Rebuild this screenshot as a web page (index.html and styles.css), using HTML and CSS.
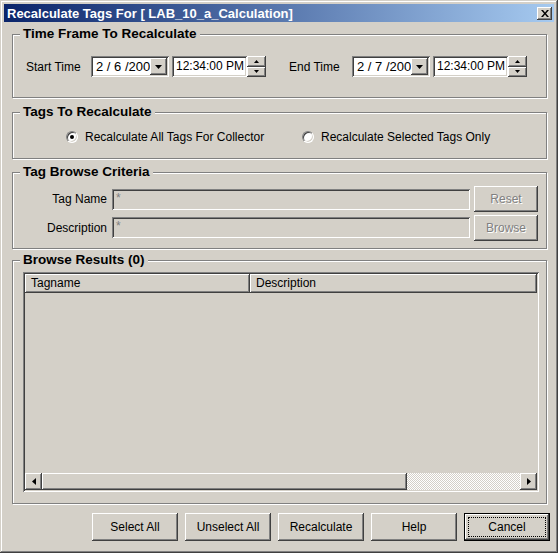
FILE: index.html
```html
<!DOCTYPE html>
<html lang="en">
<head>
  <meta charset="UTF-8" />
  <title>Recalculate Tags</title>
  <link rel="stylesheet" href="styles.css">
</head>
<body>
  <div class="window">

    <!-- title bar -->
    <div class="titlebar">
      <span class="title">Recalculate Tags For [ LAB_10_a_Calculation]</span>
      <span class="close-btn">
        <svg width="8" height="7" viewBox="0 0 8 7"><path d="M0 0h2l2 2.4L6 0h2L5 3.5 8 7H6L4 4.6 2 7H0l3-3.5z" fill="#000"/></svg>
      </span>
    </div>

    <div class="content">

      <!-- Time frame -->
      <fieldset class="group">
        <legend>Time Frame To Recalculate</legend>
        <div class="time-row">
          <span class="time-label">Start Time</span>
          <div class="date-box">
            <span class="date-text">2 / 6 /2006</span>
            <span class="drop-btn"><svg width="7" height="4" viewBox="0 0 7 4"><polygon points="0,0 7,0 3.5,4" fill="#000"/></svg></span>
          </div>
          <div class="time-box">12:34:00 PM</div>
          <div class="spinner">
            <span class="spin-btn"><svg width="5" height="3" viewBox="0 0 5 3"><polygon points="2.5,0 5,3 0,3" fill="#000"/></svg></span>
            <span class="spin-btn"><svg width="5" height="3" viewBox="0 0 5 3"><polygon points="0,0 5,0 2.5,3" fill="#000"/></svg></span>
          </div>

          <span class="time-label end-label">End Time</span>
          <div class="date-box">
            <span class="date-text">2 / 7 /2006</span>
            <span class="drop-btn"><svg width="7" height="4" viewBox="0 0 7 4"><polygon points="0,0 7,0 3.5,4" fill="#000"/></svg></span>
          </div>
          <div class="time-box">12:34:00 PM</div>
          <div class="spinner">
            <span class="spin-btn"><svg width="5" height="3" viewBox="0 0 5 3"><polygon points="2.5,0 5,3 0,3" fill="#000"/></svg></span>
            <span class="spin-btn"><svg width="5" height="3" viewBox="0 0 5 3"><polygon points="0,0 5,0 2.5,3" fill="#000"/></svg></span>
          </div>
        </div>
      </fieldset>

      <!-- Tags to recalculate -->
      <fieldset class="group tags-group">
        <legend>Tags To Recalculate</legend>
        <div class="radio-row">
          <label class="option first-option"><span class="radio checked"></span>Recalculate All Tags For Collector</label>
          <label class="option"><span class="radio"></span>Recalculate Selected Tags Only</label>
        </div>
      </fieldset>

      <!-- Browse criteria -->
      <fieldset class="group criteria-group">
        <legend>Tag Browse Criteria</legend>
        <div class="criteria-grid">
          <span class="field-label">Tag Name</span>
          <div class="input disabled">*</div>
          <span class="btn small-btn disabled-btn">Reset</span>

          <span class="field-label">Description</span>
          <div class="input disabled">*</div>
          <span class="btn small-btn disabled-btn">Browse</span>
        </div>
      </fieldset>

      <!-- Results -->
      <fieldset class="group results-group">
        <legend>Browse Results (0)</legend>
        <div class="listview">
          <div class="list-header">
            <span class="col-head col-tag">Tagname</span>
            <span class="col-head col-desc">Description</span>
          </div>
          <div class="list-body"></div>
          <div class="hscroll">
            <span class="scroll-btn"><svg width="4" height="7" viewBox="0 0 4 7"><polygon points="4,0 4,7 0,3.5" fill="#000"/></svg></span>
            <span class="scroll-thumb"></span>
            <span class="scroll-track"></span>
            <span class="scroll-btn"><svg width="4" height="7" viewBox="0 0 4 7"><polygon points="0,0 4,3.5 0,7" fill="#000"/></svg></span>
          </div>
        </div>
      </fieldset>

      <div class="buttons">
        <span class="btn">Select All</span>
        <span class="btn">Unselect All</span>
        <span class="btn">Recalculate</span>
        <span class="btn">Help</span>
        <span class="btn default-btn"><span class="focus">Cancel</span></span>
      </div>

    </div>
  </div>
</body>
</html>
```

FILE: styles.css
```css
body {
  margin: 0;
  background: #fff;
  font-family: "Liberation Sans", Arial, sans-serif;
  font-size: 12px;
  color: #000;
}

.window {
  width: 558px;
  height: 553px;
  box-sizing: border-box;
  padding: 4px;
  background: #d4d0c8;
  box-shadow: inset -1px -1px #404040, inset 1px 1px #d4d0c8, inset -2px -2px #808080, inset 2px 2px #fff;
}

/* title bar */
.titlebar {
  height: 18px;
  display: flex;
  align-items: center;
  justify-content: space-between;
  padding: 0 2px 0 3px;
  background: linear-gradient(to right, #0a246a, #a6caf0);
}

.title {
  color: #fff;
  font-weight: bold;
  font-size: 13px;
  white-space: nowrap;
}

.close-btn {
  width: 15px;
  height: 13px;
  display: flex;
  align-items: center;
  justify-content: center;
  background: #d4d0c8;
  box-shadow: inset -1px -1px #404040, inset 1px 1px #fff, inset -2px -2px #808080;
}

.content {
  padding: 0 7px 0 8px;
}

/* group boxes */
.group {
  margin: 0;
  padding: 0;
  min-width: 0;
  border: 1px solid #808080;
  box-shadow: inset 1px 1px #fff, 1px 1px #fff;
}

.group legend {
  margin-left: 7px;
  padding: 0 3px;
  font-size: 13.5px;
  font-weight: bold;
  line-height: 14px;
  background: #d4d0c8;
}

.group:first-child {
  margin-top: 5px;
}

.tags-group {
  margin-top: 7px;
}

.criteria-group {
  margin-top: 6px;
}

.results-group {
  margin-top: 4px;
}

/* time frame row */
.time-row {
  display: flex;
  align-items: center;
  height: 21px;
  padding: 15px 0 20px 13px;
}

.time-label {
  width: 65px;
  flex-shrink: 0;
}

.end-label {
  margin-left: 23px;
  width: 63px;
}

.date-box,
.time-box,
.input {
  height: 21px;
  box-sizing: border-box;
  padding: 2px;
  background: #fff;
  box-shadow: inset 1px 1px #808080, inset -1px -1px #fff, inset 2px 2px #404040, inset -2px -2px #d4d0c8;
}

.date-box {
  width: 78px;
  display: flex;
}

.date-text {
  flex: 1;
  overflow: hidden;
  white-space: nowrap;
  padding-left: 3px;
  font-size: 13px;
  line-height: 17px;
}

.drop-btn,
.spin-btn,
.scroll-btn {
  display: flex;
  align-items: center;
  justify-content: center;
  background: #d4d0c8;
  box-shadow: inset -1px -1px #404040, inset 1px 1px #fff, inset -2px -2px #808080;
}

.drop-btn {
  width: 17px;
  height: 17px;
}

.time-box {
  width: 75px;
  margin-left: 3px;
  padding-left: 4px;
  line-height: 17px;
}

.spinner {
  display: flex;
  flex-direction: column;
  width: 19px;
  height: 21px;
}

.spin-btn {
  height: 10.5px;
}

/* radio row */
.radio-row {
  display: flex;
  align-items: center;
  height: 13px;
  padding: 11px 0 15px 53px;
}

.option {
  display: flex;
  align-items: center;
  gap: 7px;
}

.first-option {
  width: 236px;
}

.radio {
  width: 12px;
  height: 12px;
  box-sizing: border-box;
  border-radius: 50%;
  background: #fff;
  border: 1px solid;
  border-color: #808080 #fff #fff #808080;
  box-shadow: inset 1px 1px #404040, inset -1px -1px #d4d0c8;
  display: flex;
  align-items: center;
  justify-content: center;
}

.radio.checked::after {
  content: "";
  width: 4px;
  height: 4px;
  border-radius: 50%;
  background: #000;
}

/* criteria grid */
.criteria-grid {
  display: grid;
  grid-template-columns: 94px 358px 63px;
  grid-template-rows: 26px 27px;
  column-gap: 5px;
  row-gap: 2px;
  align-items: center;
  padding: 7px 0 7px;
}

.criteria-grid .small-btn {
  margin-left: -1px;
}

.field-label {
  text-align: right;
}

.input.disabled {
  background: #d4d0c8;
  color: #808080;
  padding-left: 4px;
  line-height: 15px;
}

/* buttons */
.btn {
  display: flex;
  align-items: center;
  justify-content: center;
  box-sizing: border-box;
  background: #d4d0c8;
  box-shadow: inset -1px -1px #404040, inset 1px 1px #fff, inset -2px -2px #808080;
}

.small-btn {
  height: 26px;
}

.disabled-btn {
  color: #808080;
  text-shadow: 1px 1px #fff;
}

/* list view */
.listview {
  margin: 5px 7px 11px 10px;
  height: 220px;
  box-sizing: border-box;
  padding: 2px;
  display: flex;
  flex-direction: column;
  box-shadow: inset 1px 1px #808080, inset -1px -1px #fff, inset 2px 2px #404040, inset -2px -2px #d4d0c8;
}

.list-header {
  display: flex;
  height: 19px;
}

.col-head {
  box-sizing: border-box;
  padding-left: 6px;
  line-height: 19px;
  box-shadow: inset -1px -1px #404040, inset 1px 1px #fff, inset -2px -2px #808080;
}

.col-tag {
  width: 225px;
}

.col-desc {
  flex: 1;
}

.list-body {
  flex: 1;
}

.hscroll {
  display: flex;
  height: 17px;
}

.scroll-btn {
  width: 17px;
}

.scroll-thumb {
  width: 365px;
  box-shadow: inset -1px -1px #404040, inset 1px 1px #fff, inset -2px -2px #808080;
}

.scroll-track {
  flex: 1;
  background: repeating-conic-gradient(#fff 0 25%, #d4d0c8 0 50%) 0 0 / 2px 2px;
}

/* bottom buttons */
.buttons {
  display: flex;
  justify-content: flex-end;
  gap: 7px;
  margin: 9px -3px 0 0;
}

.buttons .btn {
  width: 86px;
  height: 28px;
}

.buttons .default-btn {
  border: 1px solid #000;
  padding: 3px;
}

.focus {
  flex: 1;
  align-self: stretch;
  display: flex;
  align-items: center;
  justify-content: center;
  border: 1px dotted #000;
}
```
